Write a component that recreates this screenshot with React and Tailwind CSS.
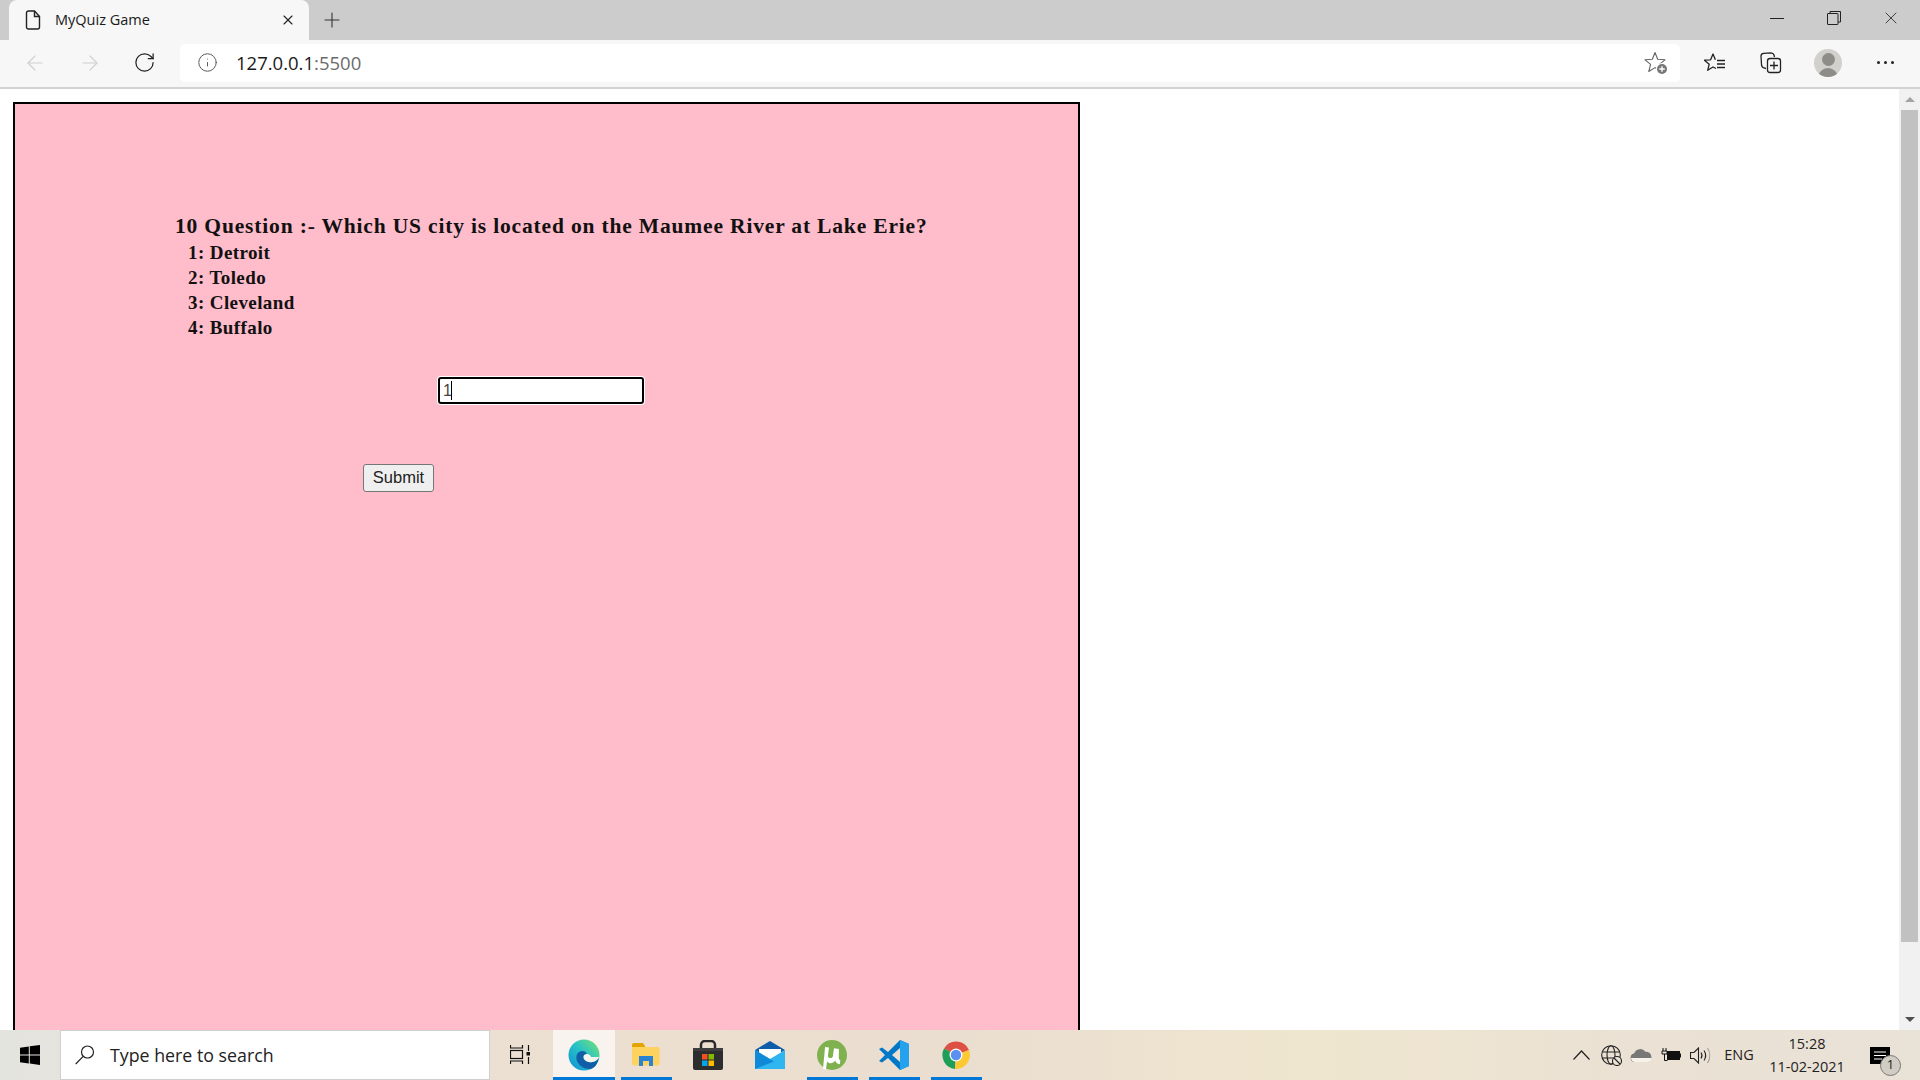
import { X, Plus, ArrowLeft, ArrowRight, RotateCw, Info } from "lucide-react";

const uiFont = "font-['Open_Sans','Noto_Sans',sans-serif]";

function FileIcon() {
  return (
    <svg width="16" height="20" viewBox="0 0 16 20" fill="none" stroke="#222" strokeWidth="1.4">
      <path d="M1.5 3a2 2 0 0 1 2-2h6l5 5.5V17a2 2 0 0 1-2 2h-9a2 2 0 0 1-2-2z" />
      <path d="M9.5 1v5.5h5" />
    </svg>
  );
}

function StarAdd() {
  return (
    <svg width="24" height="24" viewBox="0 0 24 24" fill="none">
      <path d="M11 1.500L13.700 8.300 21 8.800 15.400 13.400 17.200 20.500 11 16.600 4.800 20.500 6.600 13.400 1 8.800 8.300 8.300z" stroke="#666" strokeWidth="1.1" strokeLinejoin="round" />
      <circle cx="18" cy="18" r="6" fill="#fff" />
      <circle cx="18" cy="18" r="5" fill="#777" />
      <path d="M18 15.200v5.600M15.200 18h5.600" stroke="#fff" strokeWidth="1.4" />
    </svg>
  );
}

function Favorites() {
  return (
    <svg width="22" height="22" viewBox="0 0 22 22" fill="none" stroke="#222" strokeWidth="1.3" strokeLinejoin="round">
      <path d="M11.400 7.800L9 2 6.600 7.800 .4 8.200 5.200 12.200 3.700 18.300 9 15 12 16.500" />
      <path d="M13 8.500h8M13 12h8M13 15.500h8" />
    </svg>
  );
}

function Collections() {
  return (
    <svg width="22" height="22" viewBox="0 0 22 22" fill="none" stroke="#222" strokeWidth="1.3">
      <path d="M6 16.500l-2-.5C2.600 15.500 1.500 14 1.500 12.500L1 4c0-1.500 1-2.500 2.500-2.700L11 .8c1.500 0 2.500.7 3 2.200l.5 2" />
      <rect x="7.500" y="6.500" width="13" height="14" rx="2.500" />
      <path d="M14 9.500v8M10 13.500h8" />
    </svg>
  );
}

function Avatar() {
  return (
    <div className="w-[28px] h-[28px] rounded-full bg-[#d2d0cc] overflow-hidden flex flex-col items-center">
      <div className="w-[13px] h-[13px] rounded-full bg-[#8f8d88] mt-[4px] shrink-0" />
      <div className="w-[20px] h-[12px] rounded-t-full bg-[#8f8d88] mt-[2px] shrink-0" />
    </div>
  );
}

function RestoreIcon() {
  return (
    <svg width="14" height="14" viewBox="0 0 14 14" fill="none" stroke="#222" strokeWidth="1">
      <rect x="0.500" y="2.500" width="10.500" height="11" rx="0.500" />
      <path d="M3 2.500V.500h10.500v10.500h-2.500" />
    </svg>
  );
}

function WindowsLogo() {
  return (
    <svg width="20" height="20" viewBox="0 0 20 20" fill="#000">
      <path d="M0 2.800L8.800 1.400v8H0zM9.800 1.300L20 0v9.400H9.800zM0 10.400h8.800v8L0 17.200zM9.800 10.400H20V20L9.800 18.500z" />
    </svg>
  );
}

function SearchGlass() {
  return (
    <svg width="20" height="20" viewBox="0 0 20 20" fill="none" stroke="#222" strokeWidth="1.2">
      <circle cx="12.500" cy="7" r="6" />
      <path d="M8.200 11.300L.7 19" />
    </svg>
  );
}

function TaskView() {
  return (
    <svg width="20" height="20" viewBox="0 0 20 20" fill="none" stroke="#111" strokeWidth="1.2">
      <path d="M0.500 0v3h12V0M0.500 19v-3h12v3" />
      <rect x="0.500" y="5.500" width="12" height="8" />
      <path d="M18.500 0v6M18.500 12v7" />
      <rect x="16.500" y="7" width="3.500" height="3.500" fill="#111" stroke="none" />
    </svg>
  );
}

function EdgeIcon() {
  return (
    <svg width="32" height="32" viewBox="0 0 32 32">
      <defs>
        <linearGradient id="edgeTop" x1="0" y1="1" x2="1" y2="0">
          <stop offset="0" stopColor="#0c8fd6" />
          <stop offset="0.55" stopColor="#2bc4c4" />
          <stop offset="1" stopColor="#7de36a" />
        </linearGradient>
      </defs>
      <circle cx="16" cy="16" r="15.500" fill="url(#edgeTop)" />
      <path d="M31 18c-1 3-5 6-10 5-4-.8-5.500-3-5.500-5 0-2 2-3 3.500-3-1-3-5-4-8-2-3 2-3.500 7-1 11 2 3 6 6 12 6 4 0 8-5 9-12z" fill="#0f5ea8" />
      <path d="M15.500 18c0-2 1.500-3 3.500-3 4 .5 4 3 4 3h8c-1 3-5 6-10 5-4-.8-5.500-3-5.500-5z" fill="#f7f4ef" />
    </svg>
  );
}

function ExplorerIcon() {
  return (
    <svg width="28" height="24" viewBox="0 0 28 24">
      <path d="M0 2a2 2 0 0 1 2-2h9l2 3h0v4H0z" fill="#e3a400" />
      <path d="M0 4h26a1.500 1.500 0 0 1 1.500 1.500V21a1.500 1.500 0 0 1-1.500 1.500H2A2 2 0 0 1 0 20.500z" fill="#fdd25f" />
      <path d="M7 23V13h14v10h-4v-5h-6v5z" fill="#2a83d2" />
    </svg>
  );
}

function StoreIcon() {
  return (
    <svg width="30" height="30" viewBox="0 0 30 30">
      <path d="M8 8V5a4 4 0 0 1 4-4h6a4 4 0 0 1 4 4v3" fill="none" stroke="#2a2a2a" strokeWidth="2.500" />
      <path d="M0 8h30v20a2 2 0 0 1-2 2H2a2 2 0 0 1-2-2z" fill="#2d2d2d" />
      <rect y="8" width="30" height="3" fill="#3d3d3d" />
      <rect x="9" y="14" width="5.500" height="5.500" fill="#f25022" />
      <rect x="15.500" y="14" width="5.500" height="5.500" fill="#7fba00" />
      <rect x="9" y="20.500" width="5.500" height="5.500" fill="#00a4ef" />
      <rect x="15.500" y="20.500" width="5.500" height="5.500" fill="#ffb900" />
    </svg>
  );
}

function MailIcon() {
  return (
    <svg width="30" height="28" viewBox="0 0 30 28">
      <path d="M0 9L15 0l15 9-15 9z" fill="#0f5ca8" />
      <path d="M4 8h22v7l-11 6-11-6z" fill="#fff" />
      <path d="M0 9l15 9 15-9v19H0z" fill="#2fb6f0" />
      <path d="M0 9l19 11.500L0 28z" fill="#0f8ad8" />
    </svg>
  );
}

function TorrentIcon() {
  return (
    <svg width="30" height="30" viewBox="0 0 30 30">
      <circle cx="15" cy="15" r="15" fill="#7fb14e" />
      <path d="M7 8h4v8c0 3 5 3 5 0V8h5l1 8c.3 2 1 3 2 3v4c-3 0-4-1-5-3-2 4-6 4-8 2v8h-3z" fill="#fff" transform="rotate(8 15 15)" />
    </svg>
  );
}

function VsCodeIcon() {
  return (
    <svg width="30" height="30" viewBox="0 0 30 30">
      <path d="M21 0l9 4v22l-9 4-12-12-6 4.500L0 21l6-6-6-6 3-1.500L9 12z" fill="#0078c8" />
      <path d="M21 0l9 4v22l-9 4z" fill="#24a2ee" />
      <path d="M21 8l-8 7 8 7z" fill="#ece0d1" />
    </svg>
  );
}

function ChromeIcon() {
  return (
    <svg width="28" height="28" viewBox="0 0 28 28">
      <path d="M14 14L2 7.500A14 14 0 0 1 27 9z" fill="#dd5144" />
      <path d="M14 14L2 7.500A14 14 0 0 0 13 28z" fill="#1e9e57" />
      <path d="M14 14l13-5A14 14 0 0 1 13 28z" fill="#fcc934" />
      <circle cx="14" cy="14" r="6.500" fill="#fff" />
      <circle cx="14" cy="14" r="5.200" fill="#5b8ff0" />
    </svg>
  );
}

function TaskbarButton({ children, running, active, bar }) {
  return (
    <div className={`relative flex items-center justify-center h-full w-[62px] ${active ? "bg-[#f8f3ee]" : ""}`}>
      {children}
      {running && <div className={`absolute bottom-0 h-[3px] bg-[#0078d7] ${bar}`} />}
    </div>
  );
}

function TrayChevron() {
  return (
    <svg width="17" height="10" viewBox="0 0 17 10" fill="none" stroke="#222" strokeWidth="1.2">
      <path d="M.5 9.500L8.500 1l8 8.500" />
    </svg>
  );
}

function TrayGlobe() {
  return (
    <svg width="21" height="21" viewBox="0 0 21 21" fill="none" stroke="#222" strokeWidth="1.1">
      <circle cx="10" cy="10" r="9.300" />
      <ellipse cx="10" cy="10" rx="4" ry="9.300" />
      <path d="M1 7h18M1 13h18" />
      <circle cx="16" cy="16" r="4.500" fill="#ebe1d4" />
      <path d="M13 13l6 6" />
    </svg>
  );
}

function CloudIcon() {
  return (
    <svg width="22" height="15" viewBox="0 0 22 15">
      <path d="M4.500 14a4.300 4.300 0 0 1-.4-8.500A6.500 6.500 0 0 1 15.500 3.800 5 5 0 0 1 17 14z" fill="#777" />
      <path d="M1 10h20.500a4.500 4.500 0 0 1-4.500 4H4.500A4.400 4.400 0 0 1 1 10z" fill="#f6f2ea" />
    </svg>
  );
}

function BatteryIcon() {
  return (
    <svg width="20" height="14" viewBox="0 0 20 14" fill="none">
      <path d="M2 0v3M5 0v3M1 3h5v3H1zM3.500 6v6.500h3" stroke="#111" strokeWidth="1" />
      <rect x="6" y="3" width="13" height="9" fill="#111" />
      <rect x="19" y="5.500" width="1" height="4" fill="#111" />
    </svg>
  );
}

function SpeakerIcon() {
  return (
    <svg width="21" height="17" viewBox="0 0 21 17" fill="none" stroke="#222" strokeWidth="1.1">
      <path d="M.5 5.500h3.500L8.500 1v15L4 11.500H.5z" />
      <path d="M11 5.500c1.200 1.800 1.200 4.200 0 6" />
      <path d="M14 3.500c2 3 2 7 0 10" />
      <path d="M17.500 1c3 4.500 3 10.500 0 15" stroke="#9a9a9a" />
    </svg>
  );
}

function Scrollbar() {
  return (
    <div className="w-[21px] bg-[#f1f1f1] flex flex-col items-center shrink-0">
      <div className="h-[21px] flex items-center justify-center shrink-0">
        <div className="w-0 h-0 border-x-[5px] border-x-transparent border-b-[5px] border-b-[#a3a3a3]" />
      </div>
      <div className="w-[17px] h-[832px] bg-[#c1c1c1] shrink-0" />
      <div className="flex-1" />
      <div className="h-[21px] flex items-center justify-center shrink-0">
        <div className="w-0 h-0 border-x-[5px] border-x-transparent border-t-[5px] border-t-[#505050]" />
      </div>
    </div>
  );
}

const options = ["1: Detroit", "2: Toledo", "3: Cleveland", "4: Buffalo"];

export default function App() {
  return (
    <div className={`h-screen w-full flex flex-col overflow-hidden bg-white ${uiFont}`}>
      {/* Tab strip */}
      <div className="h-[40px] bg-[#cccccc] flex items-stretch shrink-0">
        <div className="ml-[9px] w-[300px] bg-[#f7f7f7] rounded-t-[8px] flex items-center pl-[16px] pr-[13px]">
          <FileIcon />
          <span className="ml-[14px] text-[14.5px] text-[#1a1a1a] flex-1 truncate">MyQuiz Game</span>
          <X size={16} strokeWidth={1.7} className="text-[#222]" />
        </div>
        <div className="ml-[11px] flex items-center">
          <Plus size={24} strokeWidth={1.1} className="text-[#333]" />
        </div>
        <div className="flex-1" />
        <div className="flex items-center pb-[4px]">
          <div className="w-[57px] flex justify-center"><div className="w-[14px] h-[1px] bg-[#222]" /></div>
          <div className="w-[57px] flex justify-center"><RestoreIcon /></div>
          <div className="w-[58px] flex justify-center"><X size={20} strokeWidth={1} className="text-[#222]" /></div>
        </div>
      </div>

      {/* Toolbar */}
      <div className="h-[49px] bg-[#f7f7f7] border-b-2 border-[#d2d2d2] flex items-center shrink-0">
        <div className="flex items-center pl-[23px] w-[180px] pb-[2px]">
          <ArrowLeft size={24} strokeWidth={1.1} className="text-[#cfcfcf]" />
          <ArrowRight size={24} strokeWidth={1.1} className="text-[#cfcfcf] ml-[31px]" />
          <RotateCw size={23} strokeWidth={1.3} className="text-[#222] ml-[31px]" />
        </div>
        <div className="w-[1500px] h-[38px] bg-white rounded-[5px] flex items-center pl-[17px] pr-[12px] mb-[2px]">
          <Info size={21} strokeWidth={1.1} className="text-[#555]" />
          <span className="ml-[18px] text-[18.5px] text-[#1a1a1a]">
            127.0.0.1<span className="text-[#6b6b6b]">:5500</span>
          </span>
          <div className="flex-1" />
          <StarAdd />
        </div>
        <div className="flex items-center flex-1 pb-[2px]">
          <div className="w-[70px] flex justify-center"><Favorites /></div>
          <div className="w-[41px] flex justify-center"><Collections /></div>
          <div className="w-[74px] flex justify-center"><Avatar /></div>
          <div className="flex gap-[4px] ml-[12px]">
            <div className="w-[3px] h-[3px] rounded-full bg-[#222]" />
            <div className="w-[3px] h-[3px] rounded-full bg-[#222]" />
            <div className="w-[3px] h-[3px] rounded-full bg-[#222]" />
          </div>
        </div>
      </div>

      {/* Page */}
      <div className="flex-1 flex min-h-0">
        <div className="flex-1 min-w-0 pl-[13px] pt-[13px]">
          <div className="w-[1067px] h-[1000px] border-2 border-black bg-[#ffbccb] font-['Liberation_Serif',serif] font-bold text-[#111]">
            <div className="pl-[160px] pt-[108px] text-[21.5px] leading-[28px] tracking-[0.83px]">
              10 Question :- Which US city is located on the Maumee River at Lake Erie?
            </div>
            <div className="pl-[173px] text-[19px] leading-[25px] tracking-[0.4px]">
              {options.map((o) => (
                <div key={o}>{o}</div>
              ))}
            </div>
            <div className="pl-[423px] mt-[37px]">
              <div className="relative w-[206px] h-[27px]">
                <input
                  readOnly
                  value="1"
                  className="w-full h-full bg-white border-[2px] border-black rounded-[3px] ring-1 ring-white pl-[3px] font-['Liberation_Sans',sans-serif] font-normal text-[16px] text-[#444] outline-none"
                />
                <div className="absolute left-[13px] top-[4px] w-[1px] h-[19px] bg-black" />
              </div>
            </div>
            <div className="pl-[348px] mt-[60px]">
              <button className="w-[71px] h-[28px] pb-[2px] bg-[#efefef] border border-[#767676] rounded-[3px] font-['Liberation_Sans',sans-serif] font-normal text-[16.5px] text-[#222]">
                Submit
              </button>
            </div>
          </div>
        </div>
        <Scrollbar />
      </div>

      {/* Taskbar */}
      <div className="h-[50px] shrink-0 flex items-stretch bg-[linear-gradient(90deg,#e4e4df_0%,#ecdfd0_30%,#eaded0_50%,#efe6cf_68%,#ebe1d4_85%,#e9e2d7_100%)]">
        <div className="w-[60px] flex items-center justify-center"><WindowsLogo /></div>
        <div className="w-[430px] bg-white border border-[#cfcfcf] flex items-center pl-[14px]">
          <SearchGlass />
          <span className="ml-[15px] text-[17.8px] text-[#222]">Type here to search</span>
        </div>
        <div className="w-[63px] pr-[4px] flex items-center justify-center"><TaskView /></div>
        <TaskbarButton running active bar="w-full"><EdgeIcon /></TaskbarButton>
        <TaskbarButton running bar="w-[51px]"><ExplorerIcon /></TaskbarButton>
        <TaskbarButton><StoreIcon /></TaskbarButton>
        <TaskbarButton><MailIcon /></TaskbarButton>
        <TaskbarButton running bar="w-[51px]"><TorrentIcon /></TaskbarButton>
        <TaskbarButton running bar="w-[51px]"><VsCodeIcon /></TaskbarButton>
        <TaskbarButton running bar="w-[51px]"><ChromeIcon /></TaskbarButton>
        <div className="flex-1" />

        {/* Tray */}
        <div className="flex items-center text-[#222] pr-[10px]">
          <div className="w-[30px] flex justify-center"><TrayChevron /></div>
          <div className="w-[30px] flex justify-center"><TrayGlobe /></div>
          <div className="w-[30px] flex justify-center"><CloudIcon /></div>
          <div className="w-[30px] flex justify-center"><BatteryIcon /></div>
          <div className="w-[28px] flex justify-center"><SpeakerIcon /></div>
          <div className="w-[50px] text-center text-[14.5px]">ENG</div>
          <div className="w-[86px] text-center text-[14.5px] leading-[23px]">
            <div>15:28</div>
            <div>11-02-2021</div>
          </div>
          <div className="relative w-[60px] flex justify-center">
            <svg width="20" height="17" viewBox="0 0 20 17">
              <path d="M0 0h20v17H0z" fill="#000" />
              <path d="M4 5h12M4 8.500h12M4 12h8" stroke="#fff" strokeWidth="1" />
            </svg>
            <div className="absolute left-[30px] top-[8px] w-[21px] h-[21px] rounded-full bg-[#d2cdc4] border border-[#777] flex items-center justify-center text-[13px]">1</div>
          </div>
        </div>
      </div>
    </div>
  );
}
